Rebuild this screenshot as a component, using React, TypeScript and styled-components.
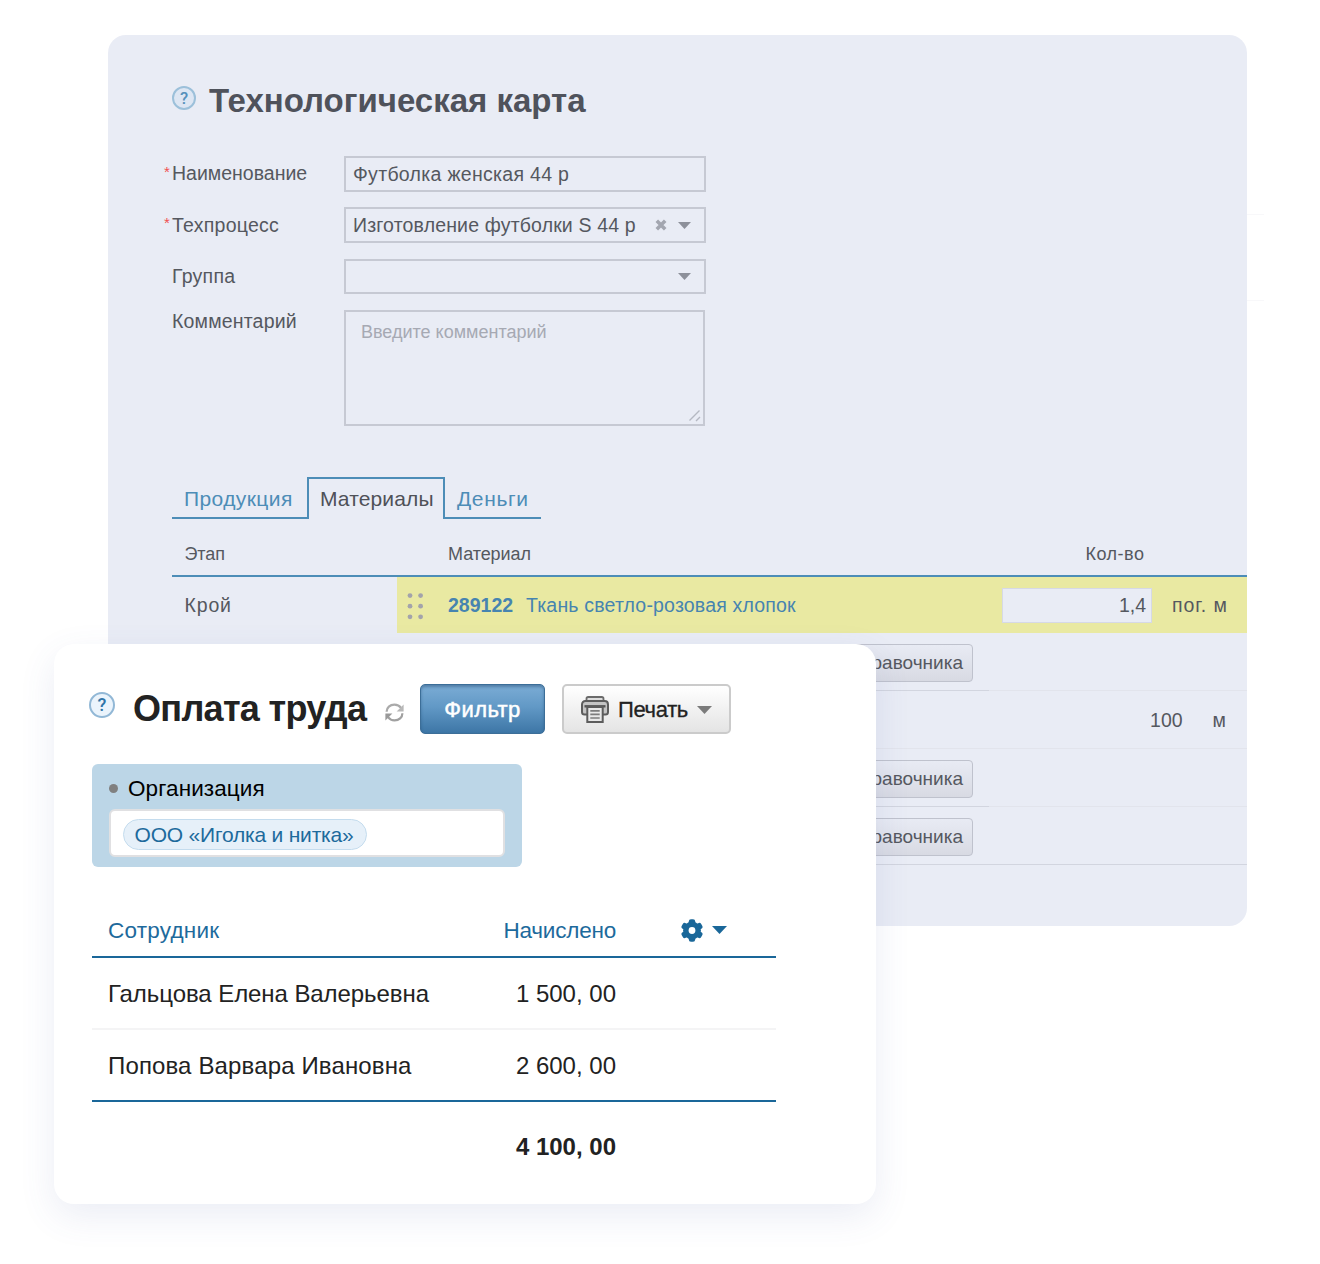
import React from 'react';
import styled, { createGlobalStyle, css } from 'styled-components';

const sans = '"Liberation Sans", Arial, sans-serif';

const GlobalStyle = createGlobalStyle`
  *, *::before, *::after { box-sizing: border-box; }
  body { margin: 0; background: #fff; font-family: ${sans}; }
`;

interface TrackProps { $track?: number }
const track = css<TrackProps>`
  letter-spacing: ${({ $track }) => $track ?? 0}px;
  white-space: nowrap;
`;

const Stage = styled.main`
  position: relative;
  width: 1320px;
  height: 1264px;
  padding: 35px 0 0 108px;
  overflow: hidden;
  background: #fff;
`;

/* ---------- technology card panel ---------- */

const SheetWrap = styled.div`
  display: flex;
  align-items: flex-start;
`;

const Sheet = styled.section`
  width: 1139px;
  height: 891px;
  padding: 45px 0 0 64px;
  border-radius: 18px;
  background: #e9ecf5;
  color: #55585f;
`;

const SheetEdge = styled.div`
  width: 17px;
  height: 87px;
  margin-top: 179px;
  border: solid #f8f8fa;
  border-width: 1px 0;
`;

const SheetHeader = styled.header`
  display: flex;
  align-items: flex-start;
  gap: 13px;
  height: 76px;
`;

const SheetTitle = styled.h1<TrackProps>`
  margin: 0;
  font-size: 33px;
  line-height: 41px;
  font-weight: 700;
  color: #4f525b;
  ${track}
`;

const HelpSlot = styled.span<{ $top: number }>`
  display: flex;
  margin-top: ${({ $top }) => $top}px;
`;

const Field = styled.div<{ $gap: number }>`
  display: flex;
  align-items: flex-start;
  margin-bottom: ${({ $gap }) => $gap}px;
`;

const Label = styled.label<{ $line?: number }>`
  display: flex;
  align-items: flex-start;
  width: 180px;
  margin-left: -8px;
  font-size: 19.5px;
  line-height: ${({ $line }) => $line ?? 35}px;
`;

const LabelText = styled.span<TrackProps>`${track}`;

const Star = styled.span`
  width: 8px;
  font-size: 15px;
  line-height: 32px;
  color: #f0504f;
`;

const Box = styled.div<{ $height?: number }>`
  display: flex;
  align-items: center;
  width: 362px;
  height: ${({ $height }) => $height ?? 36}px;
  padding: 0 13px 0 7px;
  border: 2px solid #c6c9d3;
  font-size: 19.5px;
  line-height: 32px;
  color: #55585f;
`;

const BoxText = styled.span<TrackProps>`
  flex: 1;
  ${track}
`;

const BoxIcons = styled.span`
  display: flex;
  align-items: center;
  gap: 11px;
`;

const TextArea = styled.div`
  display: flex;
  justify-content: space-between;
  width: 361px;
  height: 116px;
  padding: 4px 2px 2px 15px;
  border: 2px solid #c6c9d3;
  font-size: 18px;
  line-height: 33px;
  color: #a6a9b3;
`;
const Placeholder = styled.span<TrackProps>`${track}`;
const Grip = styled.span`
  display: flex;
  align-self: flex-end;
`;

const Tabs = styled.nav`
  display: flex;
  height: 42px;
  margin-top: 51px;
`;

const Tab = styled.span<{ $active?: boolean; $width: number }>`
  width: ${({ $width }) => $width}px;
  padding-left: ${({ $active }) => ($active ? 11 : 12)}px;
  border: 2px solid #4d8db7;
  border-width: ${({ $active }) => ($active ? '2px 2px 0' : '0 0 2px')};
  padding-top: ${({ $active }) => ($active ? 0 : 2)}px;
  font-size: 21px;
  line-height: 40px;
  color: ${({ $active }) => ($active ? '#4f5158' : '#4d8db7')};
`;
const TabText = styled.span<TrackProps>`${track}`;

const GridRow = styled.div<{ $height: number; $head?: boolean }>`
  display: grid;
  grid-template-columns: 225px 592px 258px;
  height: ${({ $height }) => $height}px;
  font-size: ${({ $head }) => ($head ? 18 : 19.5)}px;
  ${({ $head }) => $head && 'border-bottom: 2px solid #4d8db7; padding-top: 14px;'}
`;

const tone = { dark: '#d2d5df', light: '#e2e4ec', none: 'transparent' };

interface CellProps {
  $line?: keyof typeof tone;
  $mark?: boolean;
  $top?: number;
  $left?: number;
  $right?: number;
  $end?: boolean;
  $gap?: number;
}
const Cell = styled.div<CellProps>`
  display: flex;
  align-items: center;
  gap: ${({ $gap }) => $gap ?? 0}px;
  justify-content: ${({ $end }) => ($end ? 'flex-end' : 'flex-start')};
  padding: ${({ $top }) => $top ?? 0}px ${({ $right }) => $right ?? 0}px 0 ${({ $left }) => $left ?? 0}px;
  border-bottom: ${({ $line }) => ($line ? `1px solid ${tone[$line]}` : '0')};
  background: ${({ $mark }) => ($mark ? '#e9e9a2' : 'transparent')};
`;

const CellText = styled.span<TrackProps & { $link?: boolean; $bold?: boolean; $width?: number }>`
  ${({ $width }) => $width && `width: ${$width}px;`}
  font-weight: ${({ $bold }) => ($bold ? 700 : 400)};
  color: ${({ $link }) => ($link ? '#4684b0' : '#55585f')};
  ${track}
`;

const DragDots = styled.span`
  display: flex;
  width: 41px;
`;

const Quantity = styled.span`
  display: flex;
  align-items: center;
  justify-content: flex-end;
  width: 150px;
  height: 35px;
  padding-right: 5px;
  border: 1px solid #d6d9e6;
  background: #e9ecf5;
`;

const CatalogButton = styled.button`
  display: flex;
  align-items: center;
  height: 38px;
  padding: 0 9px 0 10px;
  border: 1px solid #bfc2cd;
  border-radius: 4px;
  background: linear-gradient(#e8ebf4, #d8dae3);
  font: 19px ${sans};
  color: #55585f;
`;

/* ---------- payroll panel ---------- */

const Payroll = styled.section`
  position: absolute;
  left: 54px;
  top: 644px;
  width: 822px;
  height: 560px;
  padding: 40px 100px 0 38px;
  border-radius: 20px;
  background: #fff;
  box-shadow: 0 12px 36px rgba(70, 90, 160, 0.11);
  color: #222;
`;

const PayHeader = styled.header`
  display: flex;
  align-items: flex-start;
  height: 80px;
  margin-left: -3px;
`;

const PayTitle = styled.h2<TrackProps>`
  width: 252px;
  margin: 0 0 0 18px;
  font-size: 36px;
  line-height: 49px;
  font-weight: 700;
  color: #222;
  ${track}
`;

const RefreshSlot = styled.span`
  display: flex;
  width: 35px;
  margin-top: 19px;
`;

const FilterButton = styled.button`
  width: 125px;
  height: 50px;
  padding: 2px 0 0;
  border: 1px solid #3c6e98;
  border-radius: 5px;
  background: linear-gradient(#7bacd5, #6299c6 45%, #3d76a6);
  box-shadow: inset 0 2px 3px rgba(30, 70, 110, 0.45);
  font: 500 22px ${sans};
  color: #fff;
  -webkit-text-stroke: 0.5px #fff;
`;

const PrintButton = styled.button`
  display: flex;
  align-items: center;
  width: 169px;
  height: 50px;
  margin-left: 17px;
  padding: 1px 17px 0;
  border: 2px solid #cbcbcb;
  border-radius: 5px;
  background: linear-gradient(#fff, #e4e4e4);
  font: 22px ${sans};
  color: #222;
  -webkit-text-stroke: 0.3px #222;
`;
const ButtonText = styled.span<TrackProps & { $left?: number; $right?: number }>`
  margin: 0 ${({ $right }) => $right ?? 0}px 0 ${({ $left }) => $left ?? 0}px;
  ${track}
`;

const FilterPanel = styled.div`
  width: 430px;
  height: 103px;
  padding: 5px 17px 0;
  border-radius: 6px;
  background: #bcd6e7;
`;

const FilterLabel = styled.div`
  display: flex;
  align-items: center;
  gap: 10px;
  height: 40px;
  font-size: 22.5px;
  color: #000;
`;
const FilterName = styled.span<TrackProps>`${track}`;

const Bullet = styled.span`
  width: 9px;
  height: 9px;
  margin-bottom: 1px;
  border-radius: 50%;
  background: #808080;
`;

const FilterInput = styled.div`
  display: flex;
  align-items: center;
  height: 48px;
  padding: 2px 12px 0;
  border: 2px solid #e0e0e2;
  border-radius: 6px;
  background: #fff;
`;

const Chip = styled.span`
  display: flex;
  align-items: center;
  width: 244px;
  height: 31px;
  padding: 2px 0 0 10.5px;
  border: 1px solid #c4dcee;
  border-radius: 16px;
  background: #e6f0f9;
  font-size: 21px;
  color: #1d6a9c;
`;
const ChipText = styled.span<TrackProps>`${track}`;

const PayTable = styled.div`
  margin-top: 37px;
`;

const PayRow = styled.div<{ $height: number; $kind: 'head' | 'light' | 'dark' | 'total' }>`
  display: grid;
  grid-template-columns: 1fr 180px 160px;
  align-items: center;
  height: ${({ $height }) => $height}px;
  padding: ${({ $kind }) => ($kind === 'total' ? 0 : 2)}px 0 0 16px;
  font-size: ${({ $kind }) => ($kind === 'head' ? 22.5 : 24)}px;
  font-weight: ${({ $kind }) => ($kind === 'total' ? 700 : 400)};
  color: ${({ $kind }) => ($kind === 'head' ? '#1d6a9c' : '#222')};
  border-bottom: 2px solid ${({ $kind }) => ({ head: '#1a6799', light: '#f4f4f5', dark: '#1a6799', total: 'transparent' })[$kind]};
`;

const Name = styled.span<TrackProps>`${track}`;
const Amount = styled.span<TrackProps>`
  text-align: right;
  ${track}
`;
const Tools = styled.span`
  display: flex;
  align-items: center;
  gap: 9px;
  padding: 0 0 2px 65px;
`;

/* ---------- icons ---------- */

const HelpBadge = styled.span<{ $size: number; $soft?: boolean }>`
  display: flex;
  align-items: center;
  justify-content: center;
  width: ${({ $size }) => $size}px;
  height: ${({ $size }) => $size}px;
  border: 2px solid ${({ $soft }) => ($soft ? '#9cc0da' : '#92b8d6')};
  border-radius: 50%;
  background: ${({ $soft }) => ($soft ? '#dde6f3' : '#ebf4fc')};
  font: 500 ${({ $size }) => $size * 0.7}px/1 Roboto, sans-serif;
  color: ${({ $soft }) => ($soft ? '#5590bb' : '#2f75a8')};
`;

const Caret = ({ width, height, color }: { width: number; height: number; color: string }) => (
  <svg width={width} height={height} viewBox="0 0 14 8" preserveAspectRatio="none">
    <path d="M0 0h14L7 8z" fill={color} />
  </svg>
);

const Cross = () => (
  <svg width="12" height="12" viewBox="0 0 12 12">
    <path d="M1.8 1.8l8.4 8.4M10.2 1.8l-8.4 8.4" stroke="#a3a6b0" strokeWidth="3.6" />
  </svg>
);

const ResizeGrip = () => (
  <svg width="12" height="12" viewBox="0 0 12 12">
    <path d="M0.5 10.5L10.5 0.5M7 11l4-4" stroke="#b5b8c2" strokeWidth="1.4" fill="none" />
  </svg>
);

const Dots = () => (
  <svg width="17" height="28" viewBox="0 0 17 28">
    {[3, 13.6].map((x) => [3.6, 14.2, 24.8].map((y) => <circle key={`${x}-${y}`} cx={x} cy={y} r="2.4" fill="#a3a3ab" />))}
  </svg>
);

const Refresh = () => (
  <svg width="19" height="19" viewBox="0 0 19 19" fill="none">
    <path d="M1.6 8.8C1.6 4.6 5 1.6 9.4 1.6c2.8 0 5 1 6.600 3.200" stroke="#aaa" strokeWidth="2.2" />
    <path d="M18.6 1.4v7h-7z" fill="#b8b8b8" />
    <path d="M17.4 10.2c0 4.200-3.400 7.200-7.800 7.200-2.800 0-5-1-6.600-3.200" stroke="#a0a0a0" strokeWidth="2.2" />
    <path d="M0.4 17.6v-7h7z" fill="#999" />
  </svg>
);

const Printer = () => (
  <svg width="28" height="27" viewBox="0 0 28 27" fill="none">
    <path d="M5.5 5V2.8C5.5 1.7 6.2 1 7.2 1h13.600c1 0 1.700.7 1.700 1.800V5" fill="#ddd" stroke="#6a6a6a" strokeWidth="1.8" />
    <path d="M4.4 5h19.200C25.600 5 27 6.400 27 8.400V16c0 1.500-1 2.500-2.500 2.500h-21C2 18.500 1 17.500 1 16V8.400C1 6.400 2.400 5 4.400 5z" fill="#c4c4c4" stroke="#5c5c5c" strokeWidth="2" />
    <path d="M3.5 10.3h21" stroke="#555" strokeWidth="2.4" />
    <path d="M6.3 11h15.400v15H6.300z" fill="#e8e8e8" stroke="#5c5c5c" strokeWidth="2" />
    <path d="M9.3 14.8h9.400M9.300 18.400h9.400M9.300 22h9.400" stroke="#7c7c7c" strokeWidth="1.7" />
  </svg>
);

const Gear = () => (
  <svg width="22" height="23" viewBox="-11 -11.5 22 23">
    <g fill="#1a6799">
      {[0, 60, 120].map((a) => (
        <rect key={a} x="-3.2" y="-11.2" width="6.4" height="22.4" rx="2.2" transform={`rotate(${a})`} />
      ))}
      <circle r="8.9" />
    </g>
    <circle r="3.4" fill="#fff" />
  </svg>
);

const ButtonCell = () => (
  <Cell $line="dark" $end $right={16} $top={2}>
    <CatalogButton><CellText>Добавить из справочника</CellText></CatalogButton>
  </Cell>
);

export default function App() {
  return (
    <>
      <GlobalStyle />
      <Stage>
        <SheetWrap>
          <Sheet>
            <SheetHeader>
              <HelpSlot $top={6}><HelpBadge $size={24} $soft>?</HelpBadge></HelpSlot>
              <SheetTitle>Технологическая карта</SheetTitle>
            </SheetHeader>
            <Field $gap={15}>
              <Label><Star>*</Star><LabelText>Наименование</LabelText></Label>
              <Box><BoxText $track={0.3}>Футболка женская 44 р</BoxText></Box>
            </Field>
            <Field $gap={16}>
              <Label $line={36}><Star>*</Star><LabelText $track={0.25}>Техпроцесс</LabelText></Label>
              <Box>
                <BoxText $track={0.16}>Изготовление футболки S 44 р</BoxText>
                <BoxIcons><Cross /><Caret width={13} height={7} color="#8d909a" /></BoxIcons>
              </Box>
            </Field>
            <Field $gap={16}>
              <Label><Star /><LabelText $track={0.25}>Группа</LabelText></Label>
              <Box $height={35}><BoxText /><Caret width={13} height={7} color="#8d909a" /></Box>
            </Field>
            <Field $gap={0}>
              <Label $line={23}><Star /><LabelText $track={0.18}>Комментарий</LabelText></Label>
              <TextArea><Placeholder>Введите комментарий</Placeholder><Grip><ResizeGrip /></Grip></TextArea>
            </Field>

            <Tabs>
              <Tab $width={135}><TabText $track={0.4}>Продукция</TabText></Tab>
              <Tab $width={138} $active><TabText $track={0.13}>Материалы</TabText></Tab>
              <Tab $width={96}><TabText $track={0.65}>Деньги</TabText></Tab>
            </Tabs>
            <GridRow $height={58} $head>
              <Cell $left={12.5}><CellText $track={-0.1}>Этап</CellText></Cell>
              <Cell $left={51}><CellText $track={-0.06}>Материал</CellText></Cell>
              <Cell $left={96.5}><CellText $track={0.5}>Кол-во</CellText></Cell>
            </GridRow>
            <GridRow $height={56}>
              <Cell $left={12.5} $top={1}><CellText $track={0.85}>Крой</CellText></Cell>
              <Cell $mark $left={10} $top={1}>
                <DragDots><Dots /></DragDots>
                <CellText $link $bold $width={78}>289122</CellText>
                <CellText $link $track={0.18}>Ткань светло-розовая хлопок</CellText>
              </Cell>
              <Cell $mark $left={13} $gap={20} $top={1}>
                <Quantity><CellText>1,4</CellText></Quantity>
                <CellText $track={0.9}>пог. м</CellText>
              </Cell>
            </GridRow>
            <GridRow $height={58}>
              <Cell $line="none" /><ButtonCell /><Cell $line="light" />
            </GridRow>
            <GridRow $height={58}>
              <Cell $line="none" /><Cell $line="light" />
              <Cell $line="light" $end $right={21} $gap={30} $top={2}>
                <CellText>100</CellText><CellText>м</CellText>
              </Cell>
            </GridRow>
            <GridRow $height={58}>
              <Cell $line="none" /><ButtonCell /><Cell $line="light" />
            </GridRow>
            <GridRow $height={58}>
              <Cell $line="none" /><ButtonCell /><Cell $line="dark" />
            </GridRow>
          </Sheet>
          <SheetEdge />
        </SheetWrap>

        <Payroll>
          <PayHeader>
            <HelpSlot $top={8}><HelpBadge $size={26}>?</HelpBadge></HelpSlot>
            <PayTitle $track={-0.68}>Оплата труда</PayTitle>
            <RefreshSlot><Refresh /></RefreshSlot>
            <FilterButton><ButtonText $track={0.4}>Фильтр</ButtonText></FilterButton>
            <PrintButton>
              <Printer />
              <ButtonText $left={9} $right={9} $track={-0.35}>Печать</ButtonText>
              <Caret width={15} height={8} color="#7b7b7b" />
            </PrintButton>
          </PayHeader>

          <FilterPanel>
            <FilterLabel><Bullet /><FilterName $track={0.1}>Организация</FilterName></FilterLabel>
            <FilterInput><Chip><ChipText $track={-0.2}>ООО «Иголка и нитка»</ChipText></Chip></FilterInput>
          </FilterPanel>

          <PayTable>
            <PayRow $kind="head" $height={54}>
              <Name $track={0.22}>Сотрудник</Name><Amount $track={-0.2}>Начислено</Amount>
              <Tools><Gear /><Caret width={15} height={8} color="#1a6799" /></Tools>
            </PayRow>
            <PayRow $kind="light" $height={72}>
              <Name $track={-0.07}>Гальцова Елена Валерьевна</Name><Amount>1 500, 00</Amount>
            </PayRow>
            <PayRow $kind="dark" $height={72}>
              <Name $track={0.14}>Попова Варвара Ивановна</Name><Amount>2 600, 00</Amount>
            </PayRow>
            <PayRow $kind="total" $height={92}>
              <Name /><Amount>4 100, 00</Amount>
            </PayRow>
          </PayTable>
        </Payroll>
      </Stage>
    </>
  );
}
